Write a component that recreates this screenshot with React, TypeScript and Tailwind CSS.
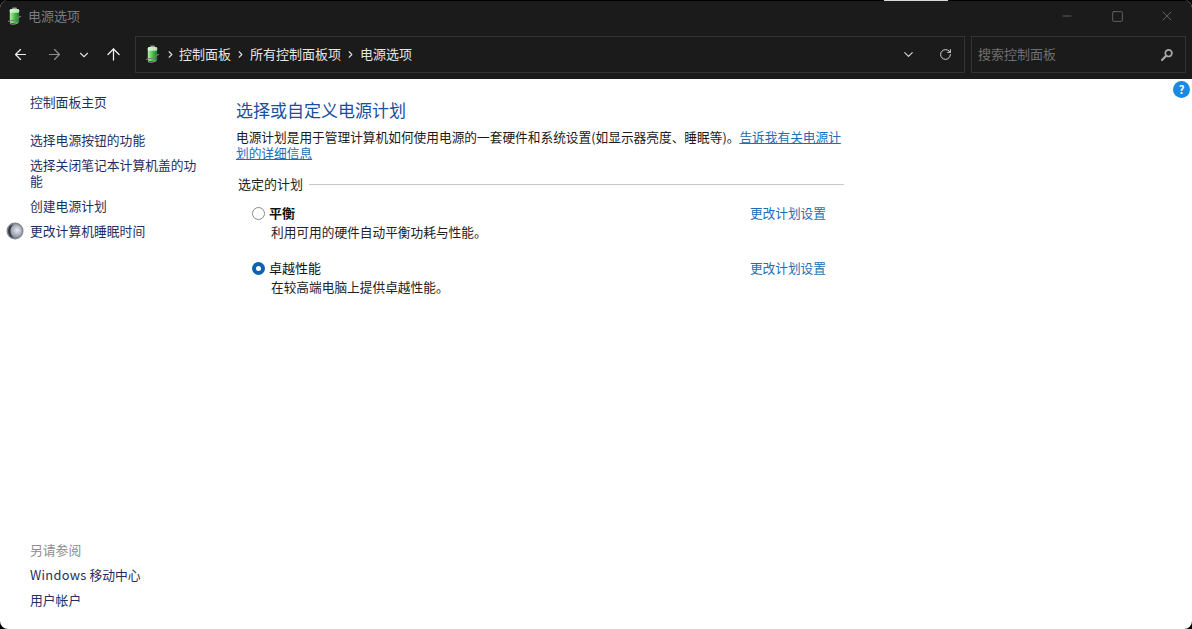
import { ArrowLeft, ArrowRight, ArrowUp, ChevronDown, ChevronRight, Minus, RotateCw, Square, X } from "lucide-react";

const FONT = "font-['Noto_Sans_CJK_SC','Noto_Sans',sans-serif]";

function BatteryIcon({ id, className }: { id: string; className: string }) {
  return (
    <svg viewBox="0 0 16 20" className={className}>
      <defs>
        <linearGradient id={id} x1="0" x2="1" y1="0" y2="0">
          <stop offset="0" stopColor="#b5eea8" />
          <stop offset="0.5" stopColor="#4fc04a" />
          <stop offset="1" stopColor="#1c7d2b" />
        </linearGradient>
      </defs>
      <rect x="5.5" y="0.5" width="5" height="2" rx="0.6" fill="#8fa08f" />
      <rect x="3" y="2" width="10" height="15" rx="1.6" fill={`url(#${id})`} />
      <rect x="3" y="2" width="10" height="4" rx="1.4" fill="#e4f5e0" opacity="0.8" />
      <path d="M1 15.5c3-2.2 5.5-.6 7.5-1.8s3.9-3.4 6.5-4" fill="none" stroke="#7b7b7b" strokeWidth="1.2" />
      <path d="M3 17.5c2.5 1 6 1 9-1" fill="none" stroke="#9a9a9a" strokeWidth="1.3" />
    </svg>
  );
}

function MoonIcon() {
  return (
    <svg viewBox="0 0 18 18" className="h-[18px] w-[18px] shrink-0">
      <defs>
        <radialGradient id="moon" cx="0.65" cy="0.45" r="0.7">
          <stop offset="0" stopColor="#e8eaf2" />
          <stop offset="0.55" stopColor="#a4a8b6" />
          <stop offset="1" stopColor="#5d606c" />
        </radialGradient>
      </defs>
      <circle cx="9" cy="9" r="8.5" fill="#85878f" />
      <circle cx="9" cy="9" r="7" fill="url(#moon)" />
      <path d="M7.5 2.2a7 7 0 0 0 0 13.6 9 9 0 0 1 0-13.6z" fill="#32343f" />
    </svg>
  );
}

function SearchIcon() {
  return (
    <svg viewBox="0 0 14 14" className="h-3.5 w-3.5">
      <circle cx="8.6" cy="5.2" r="3.3" fill="none" stroke="#a8a8a8" strokeWidth="1.7" />
      <path d="M6.2 7.8 2 12" stroke="#a8a8a8" strokeWidth="2.2" strokeLinecap="round" />
    </svg>
  );
}

function SideLink({ children, icon }: { children: React.ReactNode; icon?: React.ReactNode }) {
  return (
    <div className="relative">
      {icon && <div className="absolute top-[-1px] left-[-24px]">{icon}</div>}
      <a className="block text-[12.8px] leading-[16px] text-[#1f2f62]">{children}</a>
    </div>
  );
}

function Plan({ name, desc, selected }: { name: string; desc: string; selected?: boolean }) {
  return (
    <div className="flex flex-col">
      <div className="flex h-5 items-center pr-[18px] pl-[16px]">
        {selected ? (
          <span className="h-[13px] w-[13px] rounded-full border-4 border-[#0a63b0] bg-white" />
        ) : (
          <span className="h-[13px] w-[13px] rounded-full border border-[#8a8a8a] bg-white" />
        )}
        <span className={`ml-[4px] flex-1 text-[13px] leading-[16px] text-[#111] ${selected ? "" : "font-bold"}`}>{name}</span>
        <a className="text-[12.7px] leading-[16px] text-[#1c6fb5]">更改计划设置</a>
      </div>
      <p className="pl-[35px] text-[12.7px] leading-[18px] text-[#222]">{desc}</p>
    </div>
  );
}

export default function App() {
  return (
    <div className="bg-black">
      <div className={`relative flex h-[629px] w-[1192px] flex-col overflow-hidden rounded-[8px] bg-white ${FONT}`}>
        <header className="h-[79px] shrink-0 border-t border-black bg-[#1b1b1b]">
          <div className="flex h-[30px] items-center pl-[7px]">
            <BatteryIcon id="b1" className="h-[19px] w-[15px]" />
            <span className="ml-[6px] flex-1 text-[13px] text-[#7c7c7c]">电源选项</span>
            <div className="flex items-center text-[#7a7a7a]">
              <div className="flex w-[50px] justify-center"><Minus size={14} strokeWidth={1.2} /></div>
              <div className="flex w-[50px] justify-center"><Square size={13} strokeWidth={1.3} /></div>
              <div className="flex w-[50px] justify-center"><X size={16} strokeWidth={1.1} /></div>
            </div>
          </div>
          <div className="mt-[5px] flex h-[37px] items-center">
            <div className="flex w-[135px] items-center pl-[12px]">
              <ArrowLeft size={17} strokeWidth={1.7} className="text-[#f0f0f0]" />
              <ArrowRight size={17} strokeWidth={1.7} className="ml-[17px] text-[#8f8f8f]" />
              <ChevronDown size={14} strokeWidth={2} className="ml-[14px] text-[#d8d8d8]" />
              <ArrowUp size={19} strokeWidth={1.6} className="ml-[13px] text-[#f0f0f0]" />
            </div>
            <div className="flex h-[37px] w-[830px] items-center border border-[#333] pl-[9px] text-[13px] leading-[16px] text-[#e6e6e6]">
              <BatteryIcon id="b2" className="h-[19px] w-[15px]" />
              <ChevronRight size={11} strokeWidth={2.4} className="ml-[5px] text-[#ddd]" />
              <span className="ml-[3px] -translate-y-px">控制面板</span>
              <ChevronRight size={11} strokeWidth={2.4} className="ml-[4px] text-[#ddd]" />
              <span className="ml-[4px] -translate-y-px">所有控制面板项</span>
              <ChevronRight size={11} strokeWidth={2.4} className="ml-[4px] text-[#ddd]" />
              <span className="ml-[4px] -translate-y-px">电源选项</span>
              <ChevronDown size={15} strokeWidth={1.7} className="mr-[23px] ml-auto text-[#ddd]" />
              <RotateCw size={13} strokeWidth={1.7} className="mr-[12px] text-[#ddd]" />
            </div>
            <div className="ml-[6px] flex h-[37px] w-[215px] items-center justify-between border border-[#333] pr-[11px] pl-[6px] text-[13px] leading-[16px] text-[#6e6e6e]">
              <span className="-translate-y-px">搜索控制面板</span>
              <SearchIcon />
            </div>
          </div>
        </header>

        <div className="flex min-h-0 flex-1">
          <aside className="flex w-[206px] shrink-0 flex-col justify-between pt-[15px] pb-[21px] pl-[30px]">
            <div className="flex w-[170px] flex-col">
              <SideLink>控制面板主页</SideLink>
              <div className="mt-[22px] flex flex-col gap-[9px]">
                <SideLink>选择电源按钮的功能</SideLink>
                <SideLink>选择关闭笔记本计算机盖的功能</SideLink>
                <SideLink>创建电源计划</SideLink>
                <SideLink icon={<MoonIcon />}>更改计算机睡眠时间</SideLink>
              </div>
            </div>
            <div className="flex flex-col gap-[9px]">
              <span className="text-[12.8px] leading-[16px] text-[#8d8d8d]">另请参阅</span>
              <SideLink><span className="tracking-[0.3px]">Windows</span> 移动中心</SideLink>
              <SideLink>用户帐户</SideLink>
            </div>
          </aside>

          <main className="w-[638px] pt-[18px] pl-[30px]">
            <h1 className="text-[17px] leading-[26px] font-normal text-[#17509f]">选择或自定义电源计划</h1>
            <p className="mt-[6px] text-[12.7px] leading-[16px] text-[#1a1a1a]">
              电源计划是用于管理计算机如何使用电源的一套硬件和系统设置(如显示器亮度、睡眠等)。
              <a className="text-[#1c6fb5] underline">告诉我有关电源计划的详细信息</a>
            </p>
            <div className="mt-[15px] flex items-center pl-[2px]">
              <span className="text-[13px] leading-[16px] text-[#222]">选定的计划</span>
              <div className="ml-[6px] h-px flex-1 bg-[#c8c8c8]" />
            </div>
            <div className="mt-[11px] flex flex-col gap-[17px]">
              <Plan name="平衡" desc="利用可用的硬件自动平衡功耗与性能。" />
              <Plan name="卓越性能" desc="在较高端电脑上提供卓越性能。" selected />
            </div>
          </main>
        </div>

        <div className="absolute top-0 left-[884px] h-px w-16 bg-[#d8d8d8]" />
        <div className="absolute top-[81px] right-[2px] flex h-[17px] w-[17px] items-center justify-center rounded-full bg-[#1a8be0] text-[11px] leading-none font-bold text-white">?</div>
      </div>
    </div>
  );
}
